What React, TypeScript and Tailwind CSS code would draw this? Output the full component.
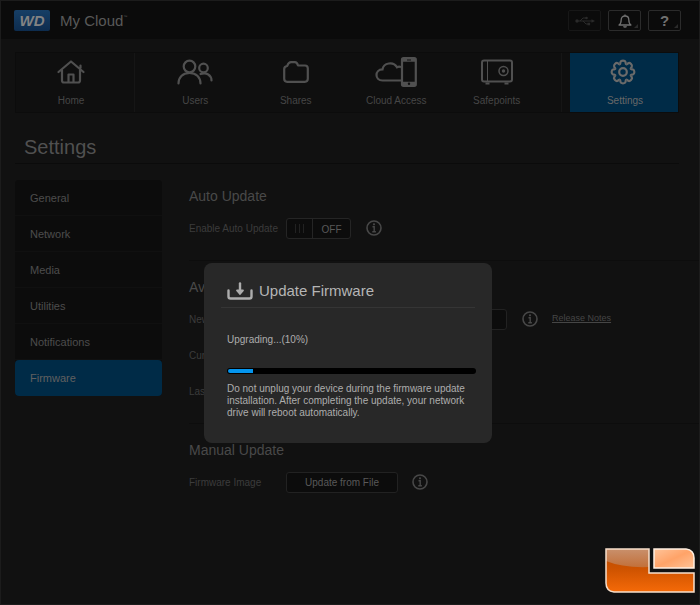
import React from "react";
import { clsx } from "clsx";

const sideLinks = ["General", "Network", "Media", "Utilities", "Notifications", "Firmware"];

const mainLinks = [
    { label: "Users", icon: <UsersIcon /> },
    { label: "Shares", icon: <FolderIcon /> },
    { label: "Cloud Access", icon: <CloudIcon /> },
    { label: "Safepoints", icon: <SafeIcon /> },
];

export default function App() {
    return (
        <div className="relative flex min-h-screen flex-col border border-[#1c1c1c] bg-[#111111] font-['Liberation_Sans',Arial,sans-serif] text-[10px] text-[#464646]">
            <Header />
            <MainNav />

            <h1 className="mr-5 ml-[14px] border-b border-[#0b0b0b] px-[9px] pt-[22px] pb-1 text-[20px] leading-[24px] text-[#505050]">
                Settings
            </h1>

            <div className="flex pt-4 pl-[14px]">
                <SideNav active="Firmware" />
                <main className="grow pt-[6px] pl-[27px]">
                    <Section title="Auto Update">
                        <Row label="Enable Auto Update" htmlFor="auto-update">
                            <button
                                id="auto-update"
                                role="switch"
                                aria-checked="false"
                                className="flex h-[21px] w-[65px] rounded-[3px] border border-[#252525] bg-[#0c0c0c] text-[#595959]">
                                <span className="flex h-full w-[26px] items-center justify-center gap-[3px] border-r border-[#252525]">
                                    <i className="h-[9px] w-px bg-[#222222]" />
                                    <i className="h-[9px] w-px bg-[#222222]" />
                                    <i className="h-[9px] w-px bg-[#222222]" />
                                </span>
                                <span className="grow text-center leading-[21px]">OFF</span>
                            </button>
                            <InfoIcon className="ml-[15px]" />
                        </Row>
                    </Section>

                    <Section title="Available Updates">
                        <Row label="New Firmware" htmlFor="check">
                            <ActionButton id="check" className="w-[221px]" />
                            <InfoIcon className="ml-[15px]" />
                            <a href="#release-notes" className="ml-[14px] text-[9px] underline">
                                Release Notes
                            </a>
                        </Row>
                        <Row label="Current" />
                        <Row label="Last" />
                    </Section>

                    <Section title="Manual Update">
                        <Row label="Firmware Image" htmlFor="from-file">
                            <ActionButton id="from-file" className="w-[112px]">
                                Update from File
                            </ActionButton>
                            <InfoIcon className="ml-[14px]" />
                        </Row>
                    </Section>
                </main>
            </div>

            <UpdateDialog percent={10} />
            <CornerBadge />
        </div>
    );
}

/**
 * page parts
 */
const Header = () => (
    <header className="flex h-[38px] items-center justify-between bg-[#0b0b0b] pt-px pr-[18px] pl-[13px]">
        <div className="flex items-center gap-[10px]">
            <span className="flex h-[21px] w-9 items-center justify-center rounded-[2px] bg-linear-to-b from-[#173f66] to-[#0d2c4e] text-[15px] leading-none font-bold text-[#838383] italic">
                WD
            </span>
            <span className="flex pt-px text-[15px] leading-[20px] text-[#595959]">
                My Cloud<span className="text-[4px] leading-[12px]">™</span>
            </span>
        </div>
        <div className="flex gap-[7px]">
            <HeaderButton label="USB" disabled>
                <svg width="20" height="10" viewBox="0 0 20 10" fill="none" stroke="#2a2a2a">
                    <circle cx="2" cy="5" r="1.7" fill="#2a2a2a" stroke="none" />
                    <path d="M2 5h15M5 5l3-3h3M8 5l3 3h2" />
                    <path d="M16.5 3.2 20 5l-3.500 1.800z" fill="#2a2a2a" stroke="none" />
                    <circle cx="11.500" cy="2" r="1.300" fill="#2a2a2a" stroke="none" />
                    <path d="M12.500 6.700h2.600v2.600h-2.600z" fill="#2a2a2a" stroke="none" />
                </svg>
            </HeaderButton>
            <HeaderButton label="Alerts">
                <svg width="14" height="14" viewBox="0 0 14 14" fill="none" stroke="#717171" strokeWidth="1.3">
                    <path d="M1 11c1.800-1 2.200-2.200 2.200-5.200C3.200 3.400 4.800 2 7 2s3.800 1.400 3.800 3.800c0 3 .4 4.200 2.200 5.200z" strokeLinejoin="round" />
                    <path d="M7 .4V2M5.500 12.300c.6.9 2.400.9 3 0" />
                </svg>
            </HeaderButton>
            <HeaderButton label="Help">
                <span className="text-[15px] leading-none font-bold text-[#717171]">?</span>
            </HeaderButton>
        </div>
    </header>
);

type HeaderButtonProps = {
    label: string;
    disabled?: boolean;
    children: React.ReactNode;
};

const HeaderButton = ({ label, disabled, children }: HeaderButtonProps) => (
    <button
        aria-label={label}
        disabled={disabled}
        className={clsx(
            "relative flex h-[21px] w-[33px] items-center justify-center rounded-[2px] border",
            disabled ? "border-[#171717]" : "border-[#2b2b2b]"
        )}>
        {children}
        {!disabled && (
            <svg className="absolute right-[2px] bottom-[2px]" width="4" height="4" viewBox="0 0 4 4">
                <path d="M4 0v4H0z" fill="#2b2b2b" />
            </svg>
        )}
    </button>
);

const MainNav = () => (
    <nav className="mt-[13px] mr-5 ml-[14px] flex h-[61px] border border-[#0c0c0c] bg-[#0f0f0f]">
        <NavLink label="Home" icon={<HomeIcon />} className="w-[110px]" />
        <div className="ml-2 flex grow border-x border-[#161616] pr-[14px] pl-[10px]">
            {mainLinks.map((link) => (
                <NavLink key={link.label} label={link.label} icon={link.icon} className="flex-1" />
            ))}
        </div>
        <NavLink label="Settings" icon={<GearIcon />} className="ml-2 w-[108px] bg-[#002b47] pl-[2px] text-[#686868]" />
    </nav>
);

type NavLinkProps = {
    label: string;
    icon: React.ReactNode;
    className?: string;
};

const NavLink = ({ label, icon, className }: NavLinkProps) => (
    <a href={"#" + label} className={clsx("flex flex-col items-center", className)}>
        <span className="flex h-[38px] items-center">{icon}</span>
        <span className="leading-[22px]">{label}</span>
    </a>
);

const SideNav = ({ active }: { active: string }) => (
    <nav className="flex h-fit w-[147px] shrink-0 flex-col rounded-[4px] bg-[#0c0c0c] text-[11px]">
        {sideLinks.map((label) => (
            <a
                key={label}
                href={"#" + label}
                className={clsx(
                    "h-9 px-[15px] leading-[36px]",
                    label === active ? "rounded-[4px] bg-[#002b47] text-[#606060]" : "border-b border-[#101010] text-[#4c4c4c]"
                )}>
                {label}
            </a>
        ))}
    </nav>
);

const Section = ({ title, children }: { title: string; children: React.ReactNode }) => (
    <section className="border-b border-[#0d0d0d] pb-[14px] not-first:pt-4 last:border-none">
        <h2 className="mb-1 text-[14px] leading-[20px] text-[#494949]">{title}</h2>
        {children}
    </section>
);

type RowProps = {
    label: string;
    htmlFor?: string;
    children?: React.ReactNode;
};

const Row = ({ label, htmlFor, children }: RowProps) => (
    <div className="flex h-9 items-center">
        <label htmlFor={htmlFor} className="w-[97px] shrink-0 whitespace-nowrap text-[#3c3c3c]">
            {label}
        </label>
        {children}
    </div>
);

const ActionButton = ({ id, className, children }: { id: string; className?: string; children?: React.ReactNode }) => (
    <button id={id} className={clsx("h-[21px] rounded-[3px] border border-[#222222] bg-[#0c0c0c] text-[#595959]", className)}>
        {children}
    </button>
);

/**
 * The dialog floats over the page while the firmware is being written
 */
const UpdateDialog = ({ percent }: { percent: number }) => (
    <div className="absolute inset-x-0 top-[262px] flex justify-center pr-1">
        <div
            role="dialog"
            aria-labelledby="dialog-title"
            className="w-[288px] rounded-[8px] bg-[#282828] px-[17px] pt-4 pb-6 text-[#adadad]">
            <div className="flex items-center gap-[6px] border-b border-[#353535] px-[6px] pb-1">
                <svg width="26" height="18" viewBox="0 0 26 18" fill="none" stroke="#adadad" strokeWidth="2.400" strokeLinecap="round" strokeLinejoin="round">
                    <path d="M1.500 8.500v6q0 2 2 2h19q2 0 2-2v-6" />
                    <path d="M13 1.500v9" />
                    <path d="M10 8.500h6l-3 3.500z" fill="#adadad" strokeWidth="1.800" />
                </svg>
                <h2 id="dialog-title" className="text-[15px] leading-[24px] text-[#b5b5b5]">
                    Update Firmware
                </h2>
            </div>
            <div className="px-[6px] pt-[26px]">
                <p className="leading-[12px]">Upgrading...({percent}%)</p>
                <div
                    role="progressbar"
                    aria-label="Upgrade progress"
                    aria-valuenow={percent}
                    className="mt-[22px] mb-[9px] h-[6px] w-[249px] rounded-full bg-black p-px">
                    <div className="h-1 rounded-l-full bg-[#0495ee]" style={{ width: percent + "%" }} />
                </div>
                <p className="leading-[12px]">
                    Do not unplug your device during the firmware update installation. After completing the update, your
                    network drive will reboot automatically.
                </p>
            </div>
        </div>
    </div>
);

const CornerBadge = () => (
    <svg className="absolute right-1 bottom-[10px]" width="90" height="46" viewBox="0 0 90 46">
        <defs>
            <linearGradient id="body" x2="0" y2="1">
                <stop offset="0" stopColor="#b84c02" />
                <stop offset=".45" stopColor="#cd5200" />
                <stop offset="1" stopColor="#f56a08" />
            </linearGradient>
            <linearGradient id="shine" x2="0" y2="1">
                <stop offset="0" stopColor="#c9906c" />
                <stop offset="1" stopColor="#c2703a" />
            </linearGradient>
            <linearGradient id="tile" x2="1" y2="1">
                <stop offset="0" stopColor="#ffc49a" />
                <stop offset=".5" stopColor="#ffa368" />
                <stop offset="1" stopColor="#ffc397" />
            </linearGradient>
        </defs>
        <path d="M1 1h43v24h45v19H9q-8-1-8-9z" fill="url(#body)" />
        <path d="M1 1h43v18Q18 20 1 13z" fill="url(#shine)" />
        <path d="M1 1h43v24h45v19H9q-8-1-8-9z" fill="none" stroke="#f8dfcb" strokeWidth="1.500" />
        <path d="M49 1h32q8 1 8 9v10H49z" fill="url(#tile)" stroke="#fff0e2" strokeWidth="1.500" />
    </svg>
);

/**
 * icons
 */
function HomeIcon() {
    return (
        <svg width="28" height="24" viewBox="0 0 28 24" fill="none" stroke="#505050" strokeWidth="2.200" strokeLinecap="round" strokeLinejoin="round">
            <path d="M1.500 12 14 1.500 26.500 12M23.500 8V5.500" />
            <path d="M5 10v10.500q0 2 2 2h14q2 0 2-2V10" />
            <path d="M11.500 22v-7.500h5V22" />
        </svg>
    );
}

function UsersIcon() {
    return (
        <svg width="36" height="26" viewBox="0 0 36 26" fill="none" stroke="#505050" strokeWidth="2.200" strokeLinecap="round">
            <circle cx="12.500" cy="7.500" r="5.800" />
            <path d="M1.500 24.500c0-6 4-10.500 11-10.500s11 4.500 11 10.500" />
            <circle cx="26.500" cy="9" r="4.300" />
            <path d="M23.500 15c6-2 11 1 11 6.500" />
        </svg>
    );
}

function FolderIcon() {
    return (
        <svg width="26" height="22" viewBox="0 0 26 22" fill="none" stroke="#505050" strokeWidth="2.200" strokeLinejoin="round">
            <path d="M1.200 8q0-2.500 3-3Q5.500 1.200 8 1.200h4q2 0 3 3.300h7q2.800 0 2.800 2.800v10.500q0 3-3 3H4.200q-3 0-3-3z" />
        </svg>
    );
}

function CloudIcon() {
    return (
        <svg width="42" height="30" viewBox="0 0 42 30" fill="none" stroke="#505050" strokeWidth="2.200">
            <path d="M26 23.500H7.500c-8 0-8-11 0-11.200 1-6.500 11-8.300 14.500-2 1.500-.8 3-.7 4 0" />
            <rect x="27" y="1.200" width="13.800" height="27.600" rx="1.500" />
            <path d="M27 3h14M27 26.500h14" strokeWidth="3.500" />
            <path d="M32 3h4" stroke="#111111" strokeWidth="1" />
            <circle cx="34" cy="26.800" r="1.200" fill="#111111" stroke="none" />
        </svg>
    );
}

function SafeIcon() {
    return (
        <svg width="32" height="26" viewBox="0 0 32 26" fill="none" stroke="#505050" strokeWidth="2">
            <rect x="1" y="1.500" width="30" height="21" rx="2" />
            <path d="M6.500 2v20" strokeWidth="1" />
            <circle cx="22.500" cy="12" r="4.500" strokeWidth="1.500" />
            <circle cx="22.500" cy="12" r="1.700" fill="#505050" stroke="none" />
            <path d="M4.500 24.500h4M23.500 24.500h4" />
        </svg>
    );
}

function GearIcon() {
    const teeth = [0, 45, 90, 135, 180, 225, 270, 315];
    return (
        <svg width="26" height="26" viewBox="-13 -13 26 26" fill="none" stroke="#6a6a6a" strokeWidth="2.200" className="mr-1">
            {teeth.map((angle) => (
                <path
                    key={angle}
                    d="M-3.200-7.700C-2.600-8-2.800-9-2.500-10C-2-11.800 2-11.800 2.500-10C2.800-9 2.600-8 3.200-7.700"
                    transform={`rotate(${angle})`}
                />
            ))}
            <circle r="3.800" />
        </svg>
    );
}

const InfoIcon = ({ className }: { className?: string }) => (
    <svg width="16" height="16" viewBox="0 0 16 16" fill="none" stroke="#484848" className={className}>
        <circle cx="8" cy="8" r="7" strokeWidth="1.600" />
        <path d="M6.500 6.800H8.200V11.500M6.300 11.700h3.600" strokeWidth="1.400" />
        <circle cx="8" cy="4.300" r="1.100" fill="#484848" stroke="none" />
    </svg>
);
